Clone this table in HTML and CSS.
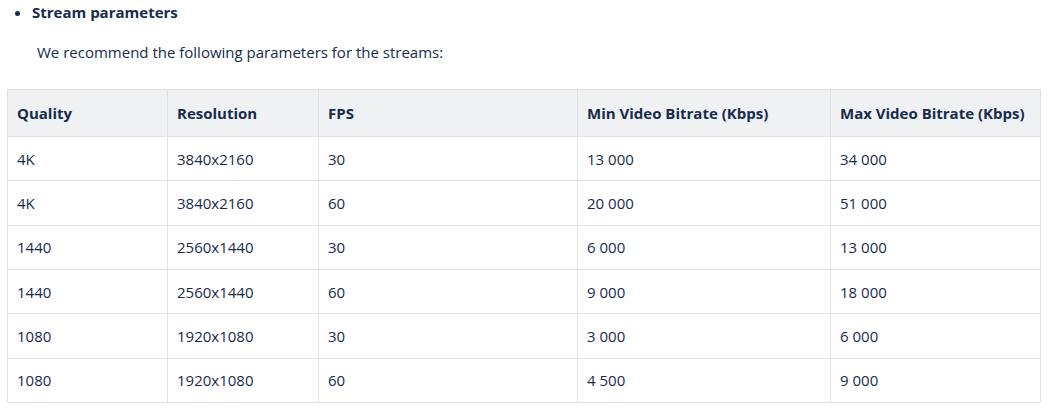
FILE: index.html
```html
<!DOCTYPE html>
<html lang="en">
<head>
<meta charset="utf-8">
<title>Stream parameters</title>
<link rel="stylesheet" href="styles.css">
</head>
<body>
<ul class="list">
  <li class="list-item"><strong>Stream parameters</strong></li>
</ul>
<p class="intro">We recommend the following parameters for the streams:</p>
<table class="params">
  <colgroup>
    <col class="c1"><col class="c2"><col class="c3"><col class="c4"><col class="c5">
  </colgroup>
  <thead>
    <tr><th>Quality</th><th>Resolution</th><th>FPS</th><th>Min Video Bitrate (Kbps)</th><th>Max Video Bitrate (Kbps)</th></tr>
  </thead>
  <tbody>
    <tr><td>4K</td><td>3840x2160</td><td>30</td><td>13 000</td><td>34 000</td></tr>
    <tr><td>4K</td><td>3840x2160</td><td>60</td><td>20 000</td><td>51 000</td></tr>
    <tr><td>1440</td><td>2560x1440</td><td>30</td><td>6 000</td><td>13 000</td></tr>
    <tr><td>1440</td><td>2560x1440</td><td>60</td><td>9 000</td><td>18 000</td></tr>
    <tr><td>1080</td><td>1920x1080</td><td>30</td><td>3 000</td><td>6 000</td></tr>
    <tr><td>1080</td><td>1920x1080</td><td>60</td><td>4 500</td><td>9 000</td></tr>
  </tbody>
</table>
</body>
</html>
```

FILE: styles.css
```css
html, body {
  margin: 0;
  padding: 0;
  background: #ffffff;
}
body {
  font-family: "Open Sans", "Noto Sans", "Liberation Sans", sans-serif;
  font-size: 15px;
  color: #172b4d;
}
.list {
  margin: 0;
  padding: 1px 0 0 32px;
  line-height: 22px;
}
.list-item strong {
  font-weight: 700;
}
.intro {
  margin: 0;
  padding: 18px 0 0 37px;
  line-height: 22px;
}
.params {
  margin: 26px 0 0 7px;
  border-collapse: collapse;
  table-layout: fixed;
  width: 1033px;
}
.c1 { width: 160px; }
.c2 { width: 151px; }
.c3 { width: 259px; }
.c4 { width: 253px; }
.c5 { width: 210px; }
.params th,
.params td {
  border: 1px solid #dfe1e6;
  text-align: left;
  padding: 0 9px;
  white-space: nowrap;
  line-height: 20px;
}
.params th {
  background: #f0f1f3;
  font-weight: 700;
  height: 46px;
}
.params td {
  height: 43.35px;
}
```
